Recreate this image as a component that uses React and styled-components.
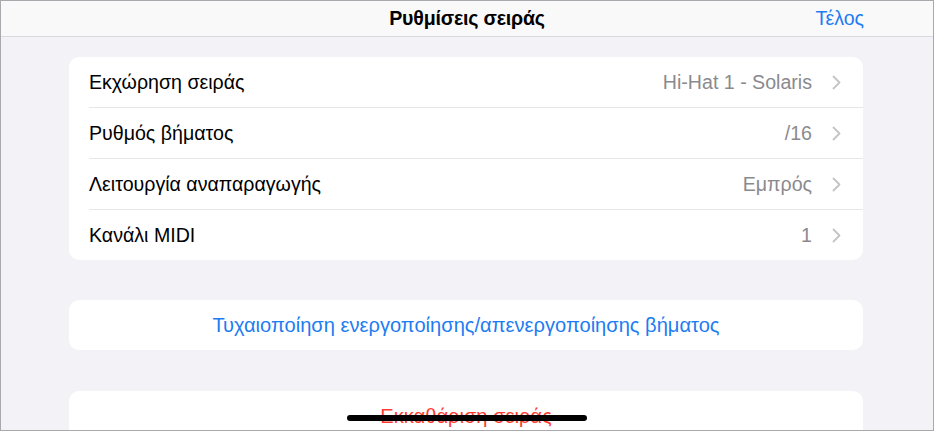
import React from "react";
import styled, { createGlobalStyle } from "styled-components";

const Global = createGlobalStyle`
  html, body { margin: 0; padding: 0; }
  body {
    font-family: "Liberation Sans", Arial, sans-serif;
    background: #f2f2f7;
  }
`;

const rows = [
  { label: "Εκχώρηση σειράς", value: "Hi-Hat 1 - Solaris" },
  { label: "Ρυθμός βήματος", value: "/16" },
  { label: "Λειτουργία αναπαραγωγής", value: "Εμπρός" },
  { label: "Κανάλι MIDI", value: "1" },
];

const Chevron = () => (
  <svg width="9" height="15" viewBox="0 0 9 15" fill="none">
    <path d="M1.5 1.5 L7.5 7.5 L1.5 13.5" stroke="#c4c4c7" strokeWidth="1.8" strokeLinecap="round" strokeLinejoin="round" />
  </svg>
);

export default function App() {
  return (
    <>
      <Global />
      <Screen>
        <Header>
          <Title>Ρυθμίσεις σειράς</Title>
          <Done>Τέλος</Done>
        </Header>
        <Body>
          <Card>
            {rows.map((r) => (
              <Row key={r.label}>
                <Label>{r.label}</Label>
                <Value>{r.value}</Value>
                <Chevron />
              </Row>
            ))}
          </Card>
          <Card>
            <ActionRow $color="#1d7cf2">
              Τυχαιοποίηση ενεργοποίησης/απενεργοποίησης βήματος
            </ActionRow>
          </Card>
          <Card $gapFix>
            <ActionRow $color="#ff3b30">Εκκαθάριση σειράς</ActionRow>
          </Card>
        </Body>
        <HomeIndicator />
      </Screen>
    </>
  );
}

const Screen = styled.div`
  position: relative;
  width: 934px;
  height: 431px;
  box-sizing: border-box;
  border: 1px solid #a9a9ad;
  background: #f2f2f7;
  overflow: hidden;
`;

const Header = styled.div`
  height: 35px;
  background: #f9f9fa;
  border-bottom: 1px solid #d9d9dd;
  display: flex;
  align-items: center;
  justify-content: center;
  position: relative;
`;

const Title = styled.div`
  font-size: 19.6px;
  font-weight: 700;
  color: #000;
  letter-spacing: -0.2px;
`;

const Done = styled.div`
  position: absolute;
  right: 69px;
  top: 0;
  bottom: 0;
  display: flex;
  align-items: center;
  font-size: 19.6px;
  color: #1d7cf2;
`;

const Body = styled.div`
  padding: 20px 70px 0 68px;
  display: flex;
  flex-direction: column;
  gap: 40px;
`;

const Card = styled.div`
  background: #fff;
  border-radius: 10px;
  padding-left: 20px;
  overflow: hidden;
  margin-top: ${(p) => (p.$gapFix ? "1px" : "0")};
`;

const Row = styled.div`
  height: 50px;
  display: flex;
  align-items: center;
  padding-right: 22px;
  gap: 20px;
  border-bottom: 1px solid #e6e6e9;
  &:last-child { border-bottom: none; }
`;

const Label = styled.div`
  flex: 1;
  font-size: 19.6px;
  color: #000;
`;

const Value = styled.div`
  font-size: 19.6px;
  color: #8a8a8e;
`;

const ActionRow = styled.div`
  height: 50px;
  margin-left: -20px;
  display: flex;
  align-items: center;
  justify-content: center;
  font-size: 20.1px;
  color: ${(p) => p.$color};
`;

const HomeIndicator = styled.div`
  position: absolute;
  left: 346px;
  top: 414px;
  width: 240px;
  height: 6px;
  border-radius: 3px;
  background: #000;
`;
